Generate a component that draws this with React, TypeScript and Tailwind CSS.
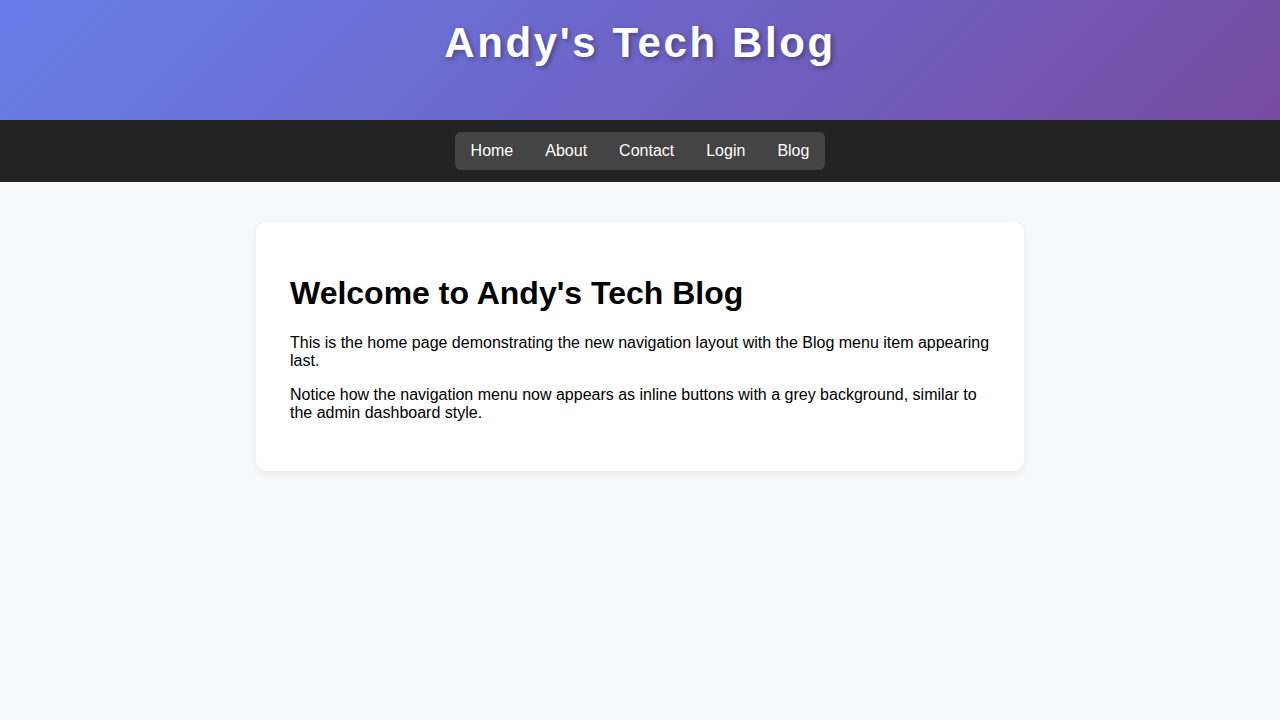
import React from 'react';

const navItems = ['Home', 'About', 'Contact', 'Login', 'Blog'];

const App: React.FC = () => {
    return (
        <div className="min-h-screen bg-[#f8f9fa] font-['Liberation_Sans',Arial,sans-serif] text-black">
            {/* Header */}
            <header className="h-[120px] bg-[linear-gradient(135deg,#667eea_0%,#764ba2_100%)] pt-[19px] text-center">
                <h1 className="text-[42px] leading-[normal] font-bold tracking-[2.6px] text-white [text-shadow:2px_2px_5px_rgba(0,0,0,0.35)]">
                    Andy's Tech Blog
                </h1>
            </header>

            {/* Navigation */}
            <nav className="flex justify-center bg-[#222222] py-3">
                <ul className="flex rounded-md bg-[#444444]">
                    {navItems.map((item) => (
                        <li key={item}>
                            <a href="#" className="block px-4 py-[10px] text-base leading-[18px] text-white">
                                {item}
                            </a>
                        </li>
                    ))}
                </ul>
            </nav>

            {/* Content */}
            <main className="mx-auto mt-10 w-[768px] rounded-[10px] bg-white px-[34px] pt-8 pb-[33px] shadow-[0_2px_10px_rgba(0,0,0,0.08)]">
                <h1 className="mt-[21px] mb-[22px] text-[32px] leading-[normal] font-bold">Welcome to Andy's Tech Blog</h1>
                <p className="my-4 text-base leading-[normal]">
                    This is the home page demonstrating the new navigation layout with the Blog menu item appearing last.
                </p>
                <p className="my-4 text-base leading-[normal]">
                    Notice how the navigation menu now appears as inline buttons with a grey background, similar to the admin dashboard style.
                </p>
            </main>
        </div>
    );
};

export default App;
